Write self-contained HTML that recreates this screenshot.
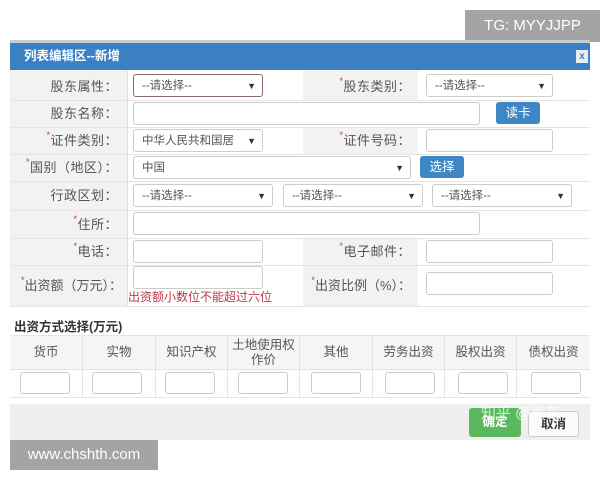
<!DOCTYPE html>
<html><head><meta charset="utf-8"><style>
*{box-sizing:border-box;margin:0;padding:0}
body{width:600px;height:480px;background:#fff;position:relative;overflow:hidden;font-family:"Liberation Sans","Noto Sans CJK SC",sans-serif;font-size:12px;color:#444}
.a{position:absolute}
.lbl{position:absolute;text-align:right;color:#555;font-size:13px;letter-spacing:0.5px}
.lbl i{color:#c33;font-style:normal;font-size:9px;vertical-align:top}
.in{position:absolute;background:#fff;border:1px solid #ccc;border-radius:3px;height:23px;font-size:11.5px;color:#555;padding:4px 8px;line-height:14px}
.sel:after{content:"▼";position:absolute;right:6px;top:4px;font-size:9px;color:#333}
.btn{position:absolute;background:#3e86c4;color:#fff;border-radius:3px;font-size:12.5px;text-align:center;line-height:22px;height:22px}
.gl{background:#f2f2f2}
.hl{position:absolute;left:10px;width:580px;height:1px;background:#e4e4e4}
.th{position:absolute;top:336px;height:33px;text-align:center;font-size:12.5px;color:#555;line-height:33px;border-right:1px solid #e4e4e4}
.ti{position:absolute;top:372px;width:50px;height:22px;border:1px solid #ccc;border-radius:3px;background:#fff}
</style></head><body>
<div class="a" style="left:465px;top:10px;width:135px;height:32px;background:#a4a4a4;color:#fff;font-size:15px;line-height:32px;text-align:center">TG: MYYJJPP</div>
<div class="a" style="left:10px;top:40px;width:580px;height:3px;background:#c8ccd0"></div>
<div class="a" style="left:10px;top:43px;width:580px;height:27px;background:#3a80c2;color:#fff;font-weight:bold;font-size:12.5px;line-height:27px;padding-left:14px">列表编辑区--新增</div>
<div class="a" style="left:576px;top:50px;width:12px;height:13px;background:#e8eef5;color:#3a80c2;font-size:10px;font-weight:bold;text-align:center;line-height:13px">x</div>
<div class="a gl" style="left:10px;top:70px;width:117px;height:236px"></div>
<div class="a gl" style="left:303px;top:70px;width:115px;height:30px"></div>
<div class="a gl" style="left:303px;top:127px;width:115px;height:27px"></div>
<div class="a gl" style="left:303px;top:238px;width:115px;height:68px"></div>
<div class="a" style="left:127px;top:70px;width:1px;height:236px;background:#e0e0e0"></div>
<div class="hl" style="top:100px"></div><div class="hl" style="top:127px"></div><div class="hl" style="top:154px"></div><div class="hl" style="top:181px"></div><div class="hl" style="top:210px"></div><div class="hl" style="top:238px"></div><div class="hl" style="top:265px"></div><div class="hl" style="top:306px"></div>
<div class="lbl" style="left:10px;width:108px;top:76px">股东属性：</div>
<div class="in sel" style="left:133px;top:74px;width:130px;border-color:#8a6a6a">--请选择--</div>
<div class="lbl" style="left:303px;width:108px;top:76px"><i>*</i>股东类别：</div>
<div class="in sel" style="left:426px;top:74px;width:127px">--请选择--</div>
<div class="lbl" style="left:10px;width:108px;top:103px">股东名称：</div>
<div class="in" style="left:133px;top:102px;width:347px"></div>
<div class="btn" style="left:496px;top:102px;width:44px">读卡</div>
<div class="lbl" style="left:10px;width:108px;top:130px"><i>*</i>证件类别：</div>
<div class="in sel" style="left:133px;top:129px;width:130px">中华人民共和国居</div>
<div class="lbl" style="left:303px;width:108px;top:130px"><i>*</i>证件号码：</div>
<div class="in" style="left:426px;top:129px;width:127px"></div>
<div class="lbl" style="left:10px;width:108px;top:157px"><i>*</i>国别（地区）：</div>
<div class="in sel" style="left:133px;top:156px;width:278px">中国</div>
<div class="btn" style="left:420px;top:156px;width:44px">选择</div>
<div class="lbl" style="left:10px;width:108px;top:185px">行政区划：</div>
<div class="in sel" style="left:133px;top:184px;width:140px">--请选择--</div>
<div class="in sel" style="left:283px;top:184px;width:140px">--请选择--</div>
<div class="in sel" style="left:432px;top:184px;width:140px">--请选择--</div>
<div class="lbl" style="left:10px;width:108px;top:214px"><i>*</i>住所：</div>
<div class="in" style="left:133px;top:212px;width:347px"></div>
<div class="lbl" style="left:10px;width:108px;top:241px"><i>*</i>电话：</div>
<div class="in" style="left:133px;top:240px;width:130px"></div>
<div class="lbl" style="left:303px;width:108px;top:241px"><i>*</i>电子邮件：</div>
<div class="in" style="left:426px;top:240px;width:127px"></div>
<div class="lbl" style="left:10px;width:112px;top:275px;letter-spacing:0"><i>*</i>出资额（万元）：</div>
<div class="in" style="left:133px;top:266px;width:130px"></div>
<div class="a" style="left:128px;top:288px;color:#c0354a;font-size:12px">出资额小数位不能超过六位</div>
<div class="lbl" style="left:303px;width:108px;top:275px;letter-spacing:0"><i>*</i>出资比例（%）：</div>
<div class="in" style="left:426px;top:272px;width:127px"></div>
<div class="a" style="left:14px;top:316px;font-weight:bold;font-size:12.5px;color:#333">出资方式选择(万元)</div>
<div class="a" style="left:10px;top:335px;width:580px;height:34px;background:#f5f5f5"></div>
<div class="hl" style="top:335px"></div><div class="hl" style="top:369px"></div><div class="hl" style="top:397px"></div>
<div class="th" style="left:10px;width:73px">货币</div>
<div class="th" style="left:83px;width:73px">实物</div>
<div class="th" style="left:156px;width:72px">知识产权</div>
<div class="th" style="left:228px;width:72px;line-height:15px;padding-top:2px">土地使用权<br>作价</div>
<div class="th" style="left:300px;width:73px">其他</div>
<div class="th" style="left:373px;width:72px">劳务出资</div>
<div class="th" style="left:445px;width:72px">股权出资</div>
<div class="th" style="left:517px;width:73px;border:0">债权出资</div>
<div class="a" style="left:82px;top:369px;width:1px;height:28px;background:#e4e4e4"></div>
<div class="a" style="left:155px;top:369px;width:1px;height:28px;background:#e4e4e4"></div>
<div class="a" style="left:227px;top:369px;width:1px;height:28px;background:#e4e4e4"></div>
<div class="a" style="left:299px;top:369px;width:1px;height:28px;background:#e4e4e4"></div>
<div class="a" style="left:372px;top:369px;width:1px;height:28px;background:#e4e4e4"></div>
<div class="a" style="left:444px;top:369px;width:1px;height:28px;background:#e4e4e4"></div>
<div class="a" style="left:516px;top:369px;width:1px;height:28px;background:#e4e4e4"></div>
<div class="ti" style="left:20px"></div><div class="ti" style="left:92px"></div><div class="ti" style="left:165px"></div><div class="ti" style="left:238px"></div><div class="ti" style="left:311px"></div><div class="ti" style="left:385px"></div><div class="ti" style="left:458px"></div><div class="ti" style="left:531px"></div>
<div class="a" style="left:10px;top:404px;width:580px;height:36px;background:#efefef"></div>
<div class="a" style="left:469px;top:408px;width:52px;height:29px;background:#5cb85c;border-radius:3px;color:#fff;font-weight:bold;text-align:center;line-height:29px;font-size:12.5px">确定</div>
<div class="a" style="left:528px;top:411px;width:51px;height:26px;background:#fafafa;border:1px solid #ccc;border-radius:3px;color:#333;font-weight:bold;text-align:center;line-height:24px;font-size:12.5px">取消</div>
<div class="a" style="left:481px;top:402px;color:rgba(255,255,255,.75);font-size:15px">知乎 @嵩花</div>
<div class="a" style="left:10px;top:440px;width:148px;height:30px;background:#a4a4a4;color:#fff;font-size:15px;line-height:30px;text-align:center">www.chshth.com</div>
</body></html>
